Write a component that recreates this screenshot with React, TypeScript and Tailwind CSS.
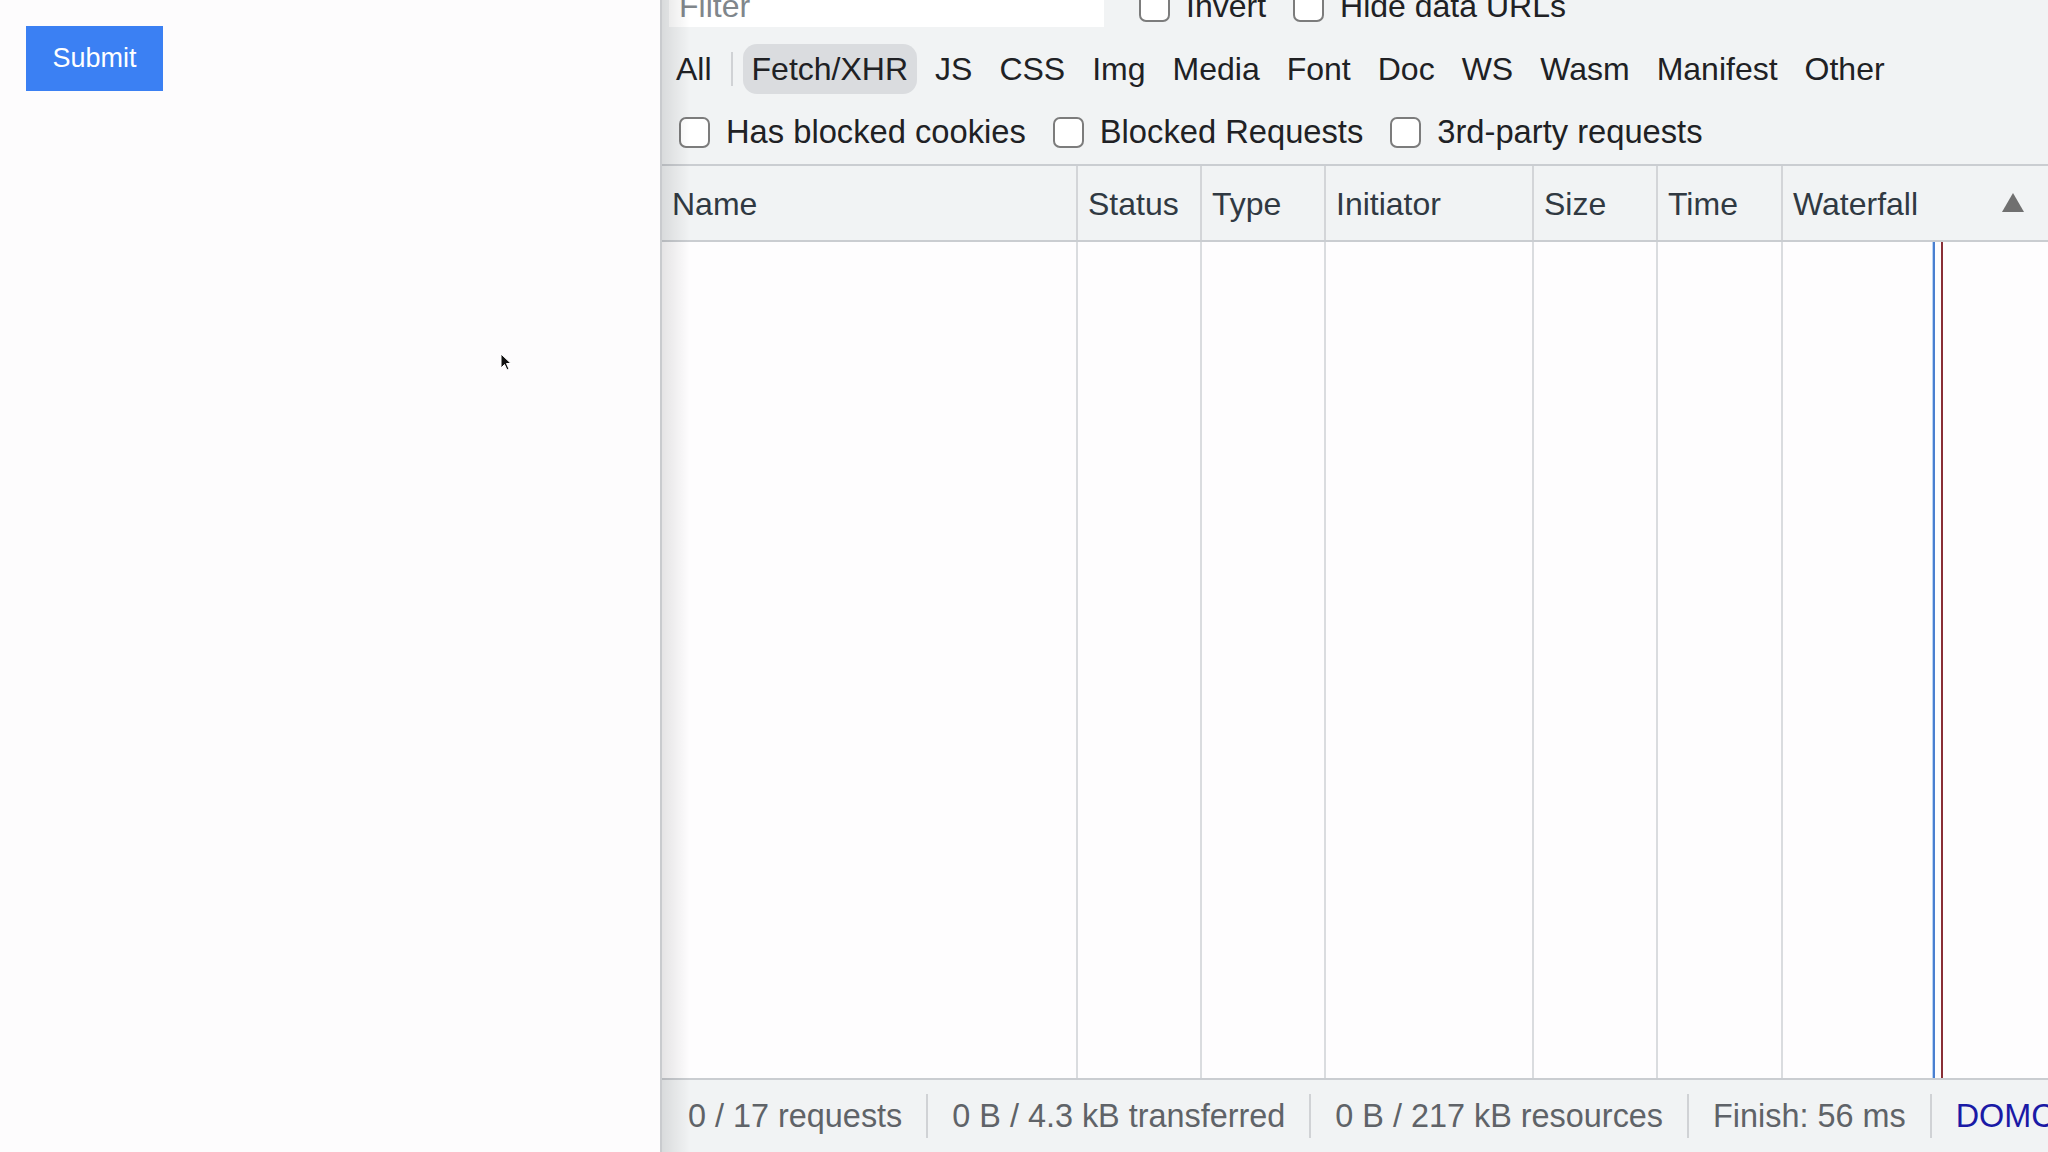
import React from 'react'

const filterTypes = ['Fetch/XHR', 'JS', 'CSS', 'Img', 'Media', 'Font', 'Doc', 'WS', 'Wasm', 'Manifest', 'Other']

const columns = [
    { label: 'Name', w: 'w-[416px]' },
    { label: 'Status', w: 'w-[124px]' },
    { label: 'Type', w: 'w-[124px]' },
    { label: 'Initiator', w: 'w-[208px]' },
    { label: 'Size', w: 'w-[124px]' },
    { label: 'Time', w: 'w-[125px]' },
]

const footerItems = ['0 / 17 requests', '0 B / 4.3 kB transferred', '0 B / 217 kB resources', 'Finish: 56 ms']

const Checkbox = ({ label }: { label: string }) => (
    <div className="flex items-center gap-[16px] h-[36px]">
        <div className="w-[31px] h-[31px] rounded-[7px] border-[2px] border-[#7c7c7c] bg-white shrink-0" />
        <span className="leading-[36px] whitespace-nowrap">{label}</span>
    </div>
)

const App: React.FC = () => {
    return (
        <div className="flex w-[2048px] h-[1152px] overflow-hidden font-['Liberation_Sans',Arial,sans-serif] text-[32px]">
            {/* page */}
            <div className="relative w-[660px] shrink-0 bg-[#fdfcfd]">
                <button className="mt-[26px] ml-[26px] w-[137px] h-[65px] bg-[#3b80f3] text-white text-[27px] flex items-center justify-center">
                    Submit
                </button>
                <svg className="absolute left-[500px] top-[353px]" width="12" height="18" viewBox="0 0 12 18">
                    <path d="M1 1 L1 15 L4.5 11.5 L7 17 L9 16 L6.5 10.5 L11 10.5 Z" fill="#111" stroke="#fff" strokeWidth="1" />
                </svg>
            </div>

            {/* devtools */}
            <div className="relative flex-1 min-w-0 overflow-hidden flex flex-col bg-[#f1f3f4] border-l-[2px] border-[#c9cbce] text-[#202124]">
                <div className="absolute inset-y-0 left-0 w-[28px] bg-linear-to-r from-black/10 to-transparent pointer-events-none" />

                {/* toolbar */}
                <div className="flex flex-col border-b-[2px] border-[#cacdd1] pb-[8px]">
                    <div className="flex items-start h-[54px] mt-[-24px]">
                        <div className="ml-[7px] w-[435px] h-[51px] bg-white pl-[10px] pt-[12px] leading-[36px] text-[#80868b]">
                            Filter
                        </div>
                        <div className="flex gap-[27px] ml-[35px] pt-[12px]">
                            <Checkbox label="Invert" />
                            <Checkbox label="Hide data URLs" />
                        </div>
                    </div>
                    <div className="flex items-center h-[78px] pl-[5px]">
                        <div className="h-[50px] px-[9px] flex items-center">All</div>
                        <div className="w-[2px] h-[34px] bg-[#d0d2d5] mx-[10px]" />
                        <div className="flex items-center gap-[9px]">
                            {filterTypes.map((t, i) => (
                                <div
                                    key={t}
                                    className={`h-[50px] px-[9px] flex items-center rounded-[14px] whitespace-nowrap ${i === 0 ? 'bg-[#dadcdf]' : ''}`}
                                >
                                    {t}
                                </div>
                            ))}
                        </div>
                    </div>
                    <div className="flex items-center h-[48px] pl-[17px] gap-[27px] text-[32.7px]">
                        <Checkbox label="Has blocked cookies" />
                        <Checkbox label="Blocked Requests" />
                        <Checkbox label="3rd-party requests" />
                    </div>
                </div>

                {/* header */}
                <div className="flex h-[76px] shrink-0 border-b-[2px] border-[#cacdd1] text-[#303942]">
                    {columns.map((c) => (
                        <div key={c.label} className={`${c.w} shrink-0 border-r-[2px] border-[#d3d5d8] flex items-center pl-[10px] pt-[2px]`}>
                            {c.label}
                        </div>
                    ))}
                    <div className="flex-1 flex items-center justify-between pl-[10px] pr-[24px] pt-[2px]">
                        <span>Waterfall</span>
                        <svg width="22" height="19" viewBox="0 0 22 19" className="mb-[4px]">
                            <path d="M11 0 L22 19 L0 19 Z" fill="#707070" />
                        </svg>
                    </div>
                </div>

                {/* body */}
                <div className="flex flex-1 bg-[#fefdfe]">
                    {columns.map((c) => (
                        <div key={c.label} className={`${c.w} shrink-0 border-r-[2px] border-[#dadcdf]`} />
                    ))}
                    <div className="relative flex-1">
                        <div className="absolute inset-y-0 left-[149px] w-[3px] bg-[#b9d3f5]" />
                        <div className="absolute inset-y-0 left-[150px] w-[2px] bg-[#4a7fd0]" />
                        <div className="absolute inset-y-0 left-[158px] w-[2px] bg-[#8a2f36]" />
                    </div>
                </div>

                {/* footer */}
                <div className="flex items-center h-[74px] shrink-0 border-t-[2px] border-[#cacdd1] pl-[2px] text-[#5f6368] text-[32.4px] whitespace-nowrap">
                    {footerItems.map((f) => (
                        <React.Fragment key={f}>
                            <div className="px-[24px]">{f}</div>
                            <div className="w-[2px] h-[44px] bg-[#d0d2d5] shrink-0" />
                        </React.Fragment>
                    ))}
                    <div className="pl-[24px] text-[#1a1aa6]">DOMContentLoaded: 42 ms</div>
                </div>
            </div>
        </div>
    )
}

export default App
